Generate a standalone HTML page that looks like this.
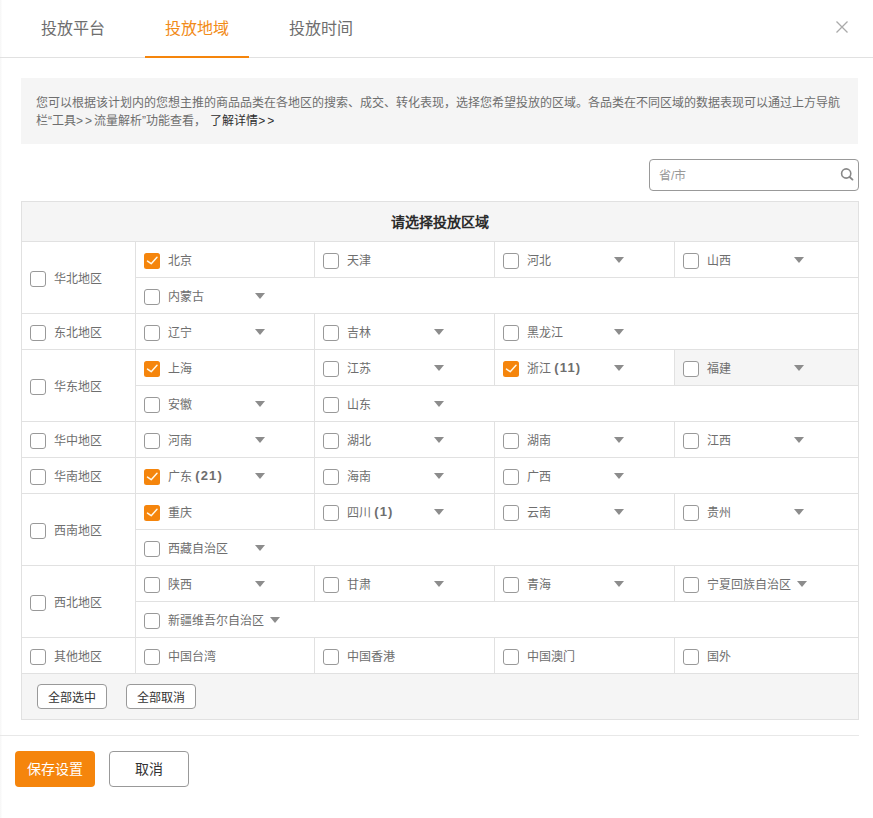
<!DOCTYPE html>
<html lang="zh-CN">
<head>
<meta charset="utf-8">
<title>投放地域</title>
<style>
*{box-sizing:border-box;margin:0;padding:0}
html,body{width:873px;height:818px;overflow:hidden;background:#fff}
body{position:relative;font-family:"Liberation Sans",sans-serif;font-size:12px;color:#6e6e6e}
.edge{position:absolute;left:0;top:0;width:2px;height:818px;background:linear-gradient(to right,#f6f6f6,#fdfdfd)}
/* header */
.hd{position:absolute;left:0;top:0;width:873px;height:58px;border-bottom:1px solid #e1e1e1}
.tab{position:absolute;top:0;height:58px;width:104px;text-align:center;font-size:16px;line-height:58px;color:#6e6e6e}
.tab.on{color:#f28b18;border-bottom:2px solid #f5850c}
.close{position:absolute;left:835px;top:20px;width:14px;height:14px}
/* notice */
.note{position:absolute;left:21px;top:78px;width:837px;height:66px;background:#f5f5f5;padding:16px 15px 14px;font-size:12px;line-height:18px;color:#6e6e6e;white-space:nowrap}
.note b{font-weight:normal;color:#2e2e2e;margin-left:1px}
.gt{letter-spacing:2px}
/* search */
.search{position:absolute;left:649px;top:159px;width:210px;height:32px;border:1px solid #999;border-radius:4px;background:#fff}
.search span{position:absolute;left:9px;top:1px;line-height:30px;font-size:12px;color:#999}
.search svg{position:absolute;left:190px;top:7px}
/* table */
.tb{position:absolute;left:21px;top:201px;width:838px;height:519px;border:1px solid #e1e1e1;background:#fff}
.th{height:40px;border-bottom:1px solid #e1e1e1;background:#f5f5f5;text-align:center;font-size:14px;font-weight:bold;color:#2b2b2b;line-height:41px;overflow:hidden}
.grp{display:flex;border-bottom:1px solid #e1e1e1}
.rg{width:114px;border-right:1px solid #e1e1e1;display:flex;align-items:center;padding-left:8px;color:#6e6e6e}
.sub{flex:1;min-width:0}
.row{display:flex;height:35px}
.row+.row{border-top:1px solid #e1e1e1;height:36px}
.c{height:100%;display:flex;align-items:center;padding-left:8px;border-right:1px solid #e1e1e1;white-space:nowrap;flex:none}
.c1{width:179px}.c2{width:180px}.c3{width:180px}
.c:last-child{border-right:0;flex:1}
.c.hov{background:#f5f5f5}
.cb{display:inline-block;width:16px;height:16px;border:1px solid #999;border-radius:3px;background:#fff;flex:none;margin-right:8px;position:relative;top:1.5px}
.cb.on{border:0;background:#f5850c;border-radius:2.5px}
.cb.on svg{position:absolute;left:0;top:0}
.nm{display:inline-block;min-width:81px;color:#6e6e6e}
.nm b{color:#6e6e6e;font-size:13px;letter-spacing:1.1px;line-height:12px;position:relative;top:-1px}
.ar{display:inline-block;width:0;height:0;border-left:5.5px solid transparent;border-right:5.5px solid transparent;border-top:6px solid #8c8c8c;margin-left:6px;position:relative;top:.5px}
.ft{height:45px;background:#f5f5f5;position:relative}
.sb{position:absolute;top:10px;width:70px;height:25px;border:1px solid #999;border-radius:4px;background:#fff;color:#333;font-size:12px;line-height:27px;text-align:center;overflow:hidden}
/* bottom */
.sep{position:absolute;left:0;top:735px;width:859px;height:1px;background:#e8e8e8}
.btn{position:absolute;top:751px;width:80px;height:36px;border-radius:4px;font-size:14px;line-height:34px;text-align:center}
.save{left:15px;background:#f5850c;color:#fff;line-height:36px}
.cancel{left:109px;border:1px solid #999;color:#333;background:#fff}
</style>
</head>
<body>
<div class="edge"></div>
<div class="hd">
  <div class="tab" style="left:21px">投放平台</div>
  <div class="tab on" style="left:145px">投放地域</div>
  <div class="tab" style="left:269px">投放时间</div>
  <svg class="close" viewBox="0 0 14 14"><path d="M1.5 1.5 L12.5 12.5 M12.5 1.5 L1.5 12.5" stroke="#aaa" stroke-width="1.3" fill="none"/></svg>
</div>

<div class="note">您可以根据该计划内的您想主推的商品品类在各地区的搜索、成交、转化表现，选择您希望投放的区域。各品类在不同区域的数据表现可以通过上方导航<br>栏“工具<span class="gt">&gt;&gt;</span>流量解析”功能查看， <b>了解详情<span class="gt">&gt;&gt;</span></b></div>

<div class="search"><span>省/市</span>
  <svg width="16" height="16" viewBox="0 0 16 16"><circle cx="6.2" cy="6.5" r="4.6" stroke="#888" stroke-width="1.6" fill="none"/><path d="M9.6 10 L12.5 12.6" stroke="#888" stroke-width="1.9" stroke-linecap="round"/></svg>
</div>

<div class="tb">
  <div class="th">请选择投放区域</div>

  <div class="grp">
    <div class="rg"><i class="cb"></i>华北地区</div>
    <div class="sub">
      <div class="row">
        <div class="c c1"><i class="cb on"><svg width="16" height="16" viewBox="0 0 16 16"><path d="M3.5 8.1 L7.2 10.7 L13 4.3" stroke="#fff8e8" stroke-width="1.5" fill="none" stroke-linecap="round" stroke-linejoin="round"/></svg></i><span class="nm">北京</span></div>
        <div class="c c2"><i class="cb"></i><span class="nm">天津</span></div>
        <div class="c c3"><i class="cb"></i><span class="nm">河北</span><i class="ar"></i></div>
        <div class="c"><i class="cb"></i><span class="nm">山西</span><i class="ar"></i></div>
      </div>
      <div class="row">
        <div class="c"><i class="cb"></i><span class="nm">内蒙古</span><i class="ar"></i></div>
      </div>
    </div>
  </div>

  <div class="grp">
    <div class="rg"><i class="cb"></i>东北地区</div>
    <div class="sub">
      <div class="row">
        <div class="c c1"><i class="cb"></i><span class="nm">辽宁</span><i class="ar"></i></div>
        <div class="c c2"><i class="cb"></i><span class="nm">吉林</span><i class="ar"></i></div>
        <div class="c"><i class="cb"></i><span class="nm">黑龙江</span><i class="ar"></i></div>
      </div>
    </div>
  </div>

  <div class="grp">
    <div class="rg"><i class="cb"></i>华东地区</div>
    <div class="sub">
      <div class="row">
        <div class="c c1"><i class="cb on"><svg width="16" height="16" viewBox="0 0 16 16"><path d="M3.5 8.1 L7.2 10.7 L13 4.3" stroke="#fff8e8" stroke-width="1.5" fill="none" stroke-linecap="round" stroke-linejoin="round"/></svg></i><span class="nm">上海</span></div>
        <div class="c c2"><i class="cb"></i><span class="nm">江苏</span><i class="ar"></i></div>
        <div class="c c3"><i class="cb on"><svg width="16" height="16" viewBox="0 0 16 16"><path d="M3.5 8.1 L7.2 10.7 L13 4.3" stroke="#fff8e8" stroke-width="1.5" fill="none" stroke-linecap="round" stroke-linejoin="round"/></svg></i><span class="nm">浙江 <b>(11)</b></span><i class="ar"></i></div>
        <div class="c hov"><i class="cb"></i><span class="nm">福建</span><i class="ar"></i></div>
      </div>
      <div class="row">
        <div class="c c1"><i class="cb"></i><span class="nm">安徽</span><i class="ar"></i></div>
        <div class="c"><i class="cb"></i><span class="nm">山东</span><i class="ar"></i></div>
      </div>
    </div>
  </div>

  <div class="grp">
    <div class="rg"><i class="cb"></i>华中地区</div>
    <div class="sub">
      <div class="row">
        <div class="c c1"><i class="cb"></i><span class="nm">河南</span><i class="ar"></i></div>
        <div class="c c2"><i class="cb"></i><span class="nm">湖北</span><i class="ar"></i></div>
        <div class="c c3"><i class="cb"></i><span class="nm">湖南</span><i class="ar"></i></div>
        <div class="c"><i class="cb"></i><span class="nm">江西</span><i class="ar"></i></div>
      </div>
    </div>
  </div>

  <div class="grp">
    <div class="rg"><i class="cb"></i>华南地区</div>
    <div class="sub">
      <div class="row">
        <div class="c c1"><i class="cb on"><svg width="16" height="16" viewBox="0 0 16 16"><path d="M3.5 8.1 L7.2 10.7 L13 4.3" stroke="#fff8e8" stroke-width="1.5" fill="none" stroke-linecap="round" stroke-linejoin="round"/></svg></i><span class="nm">广东 <b>(21)</b></span><i class="ar"></i></div>
        <div class="c c2"><i class="cb"></i><span class="nm">海南</span><i class="ar"></i></div>
        <div class="c"><i class="cb"></i><span class="nm">广西</span><i class="ar"></i></div>
      </div>
    </div>
  </div>

  <div class="grp">
    <div class="rg"><i class="cb"></i>西南地区</div>
    <div class="sub">
      <div class="row">
        <div class="c c1"><i class="cb on"><svg width="16" height="16" viewBox="0 0 16 16"><path d="M3.5 8.1 L7.2 10.7 L13 4.3" stroke="#fff8e8" stroke-width="1.5" fill="none" stroke-linecap="round" stroke-linejoin="round"/></svg></i><span class="nm">重庆</span></div>
        <div class="c c2"><i class="cb"></i><span class="nm">四川 <b>(1)</b></span><i class="ar"></i></div>
        <div class="c c3"><i class="cb"></i><span class="nm">云南</span><i class="ar"></i></div>
        <div class="c"><i class="cb"></i><span class="nm">贵州</span><i class="ar"></i></div>
      </div>
      <div class="row">
        <div class="c"><i class="cb"></i><span class="nm">西藏自治区</span><i class="ar"></i></div>
      </div>
    </div>
  </div>

  <div class="grp">
    <div class="rg"><i class="cb"></i>西北地区</div>
    <div class="sub">
      <div class="row">
        <div class="c c1"><i class="cb"></i><span class="nm">陕西</span><i class="ar"></i></div>
        <div class="c c2"><i class="cb"></i><span class="nm">甘肃</span><i class="ar"></i></div>
        <div class="c c3"><i class="cb"></i><span class="nm">青海</span><i class="ar"></i></div>
        <div class="c"><i class="cb"></i><span class="nm">宁夏回族自治区</span><i class="ar"></i></div>
      </div>
      <div class="row">
        <div class="c"><i class="cb"></i><span class="nm">新疆维吾尔自治区</span><i class="ar"></i></div>
      </div>
    </div>
  </div>

  <div class="grp">
    <div class="rg"><i class="cb"></i>其他地区</div>
    <div class="sub">
      <div class="row">
        <div class="c c1"><i class="cb"></i><span class="nm">中国台湾</span></div>
        <div class="c c2"><i class="cb"></i><span class="nm">中国香港</span></div>
        <div class="c c3"><i class="cb"></i><span class="nm">中国澳门</span></div>
        <div class="c"><i class="cb"></i><span class="nm">国外</span></div>
      </div>
    </div>
  </div>

  <div class="ft">
    <div class="sb" style="left:15px">全部选中</div>
    <div class="sb" style="left:104px">全部取消</div>
  </div>
</div>

<div class="sep"></div>
<div class="btn save">保存设置</div>
<div class="btn cancel">取消</div>
</body>
</html>
